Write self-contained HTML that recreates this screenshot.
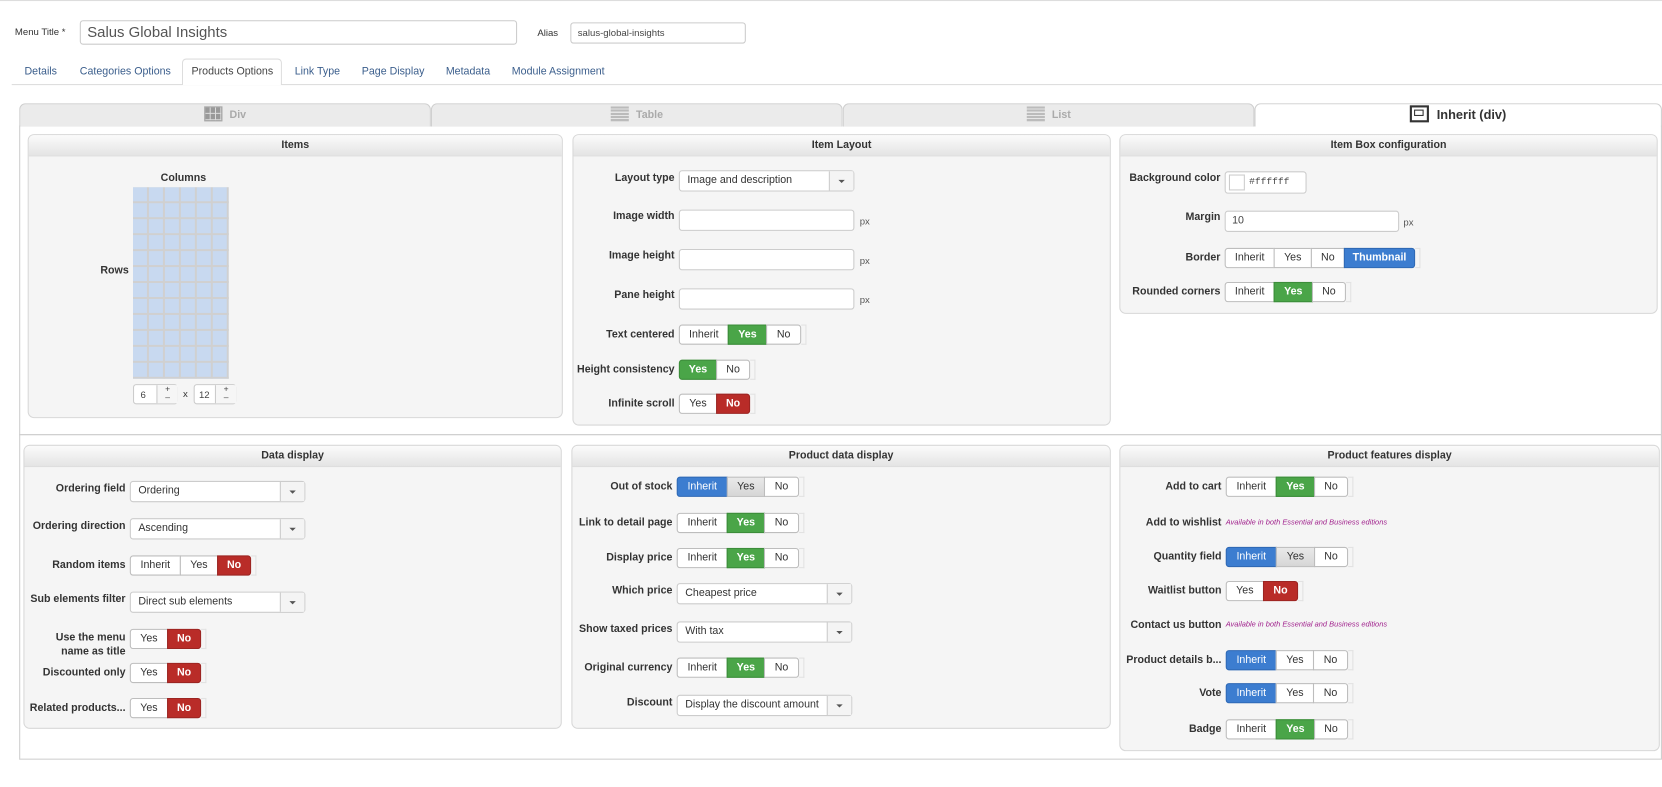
<!DOCTYPE html>
<html><head><meta charset="utf-8">
<style>
*{box-sizing:border-box;margin:0;padding:0}
html,body{width:1662px;height:787px;overflow:hidden;background:#fff}
#w{position:absolute;left:0;top:0;width:1562px;height:740px;transform:scale(1.064);transform-origin:0 0;font-family:"Liberation Sans",Arial,sans-serif;color:#333}
.a{position:absolute}
.l{position:absolute;font:bold 10px "Liberation Sans",Arial,sans-serif;color:#333;text-align:right;width:160px;white-space:nowrap}
.p{position:absolute;background:#f5f5f5;border:1px solid #d8d8d8;border-radius:6px;overflow:hidden}
.h{height:20px;background:linear-gradient(#fbfbfb,#e4e4e4);border-bottom:1px solid #ddd;text-align:center;font:bold 10px "Liberation Sans",Arial,sans-serif;line-height:20px;color:#333}
.g{position:absolute;display:flex;height:19px}
.g span{display:block;height:19px;line-height:17px;font-size:10px;text-align:center;background:#fff;border:1px solid #bdbdbd;margin-right:-1px;color:#333}
.g span:first-child{border-radius:3px 0 0 3px}
.g span.e{border-radius:0 3px 3px 0}
.g i{display:block;width:5px;height:19px;border:1px solid #e2e2e2;border-left:none;margin-left:1px}
.g .gr{background:#4aa548;border-color:#3c8d3a;color:#fff;font-weight:bold}
.g .rd{background:#b92c28;border-color:#9c2522;color:#fff;font-weight:bold}
.g .bl{background:#3c7dd0;border-color:#2f69b5;color:#fff}
.g .gy{background:linear-gradient(#e9e9e9,#d6d6d6)}
.s{position:absolute;height:20px;background:#fff;border:1px solid #ccc;border-radius:3px;font-size:10px;line-height:18px;padding-left:7px;color:#333}
.s:after{content:"";position:absolute;right:0;top:0;width:22px;height:18px;border-left:1px solid #ccc;background:#f4f4f4}
.s b{position:absolute;right:8px;top:8px;border-left:3px solid transparent;border-right:3px solid transparent;border-top:3px solid #555;z-index:2}
.in{position:absolute;height:20px;background:#fff;border:1px solid #ccc;border-radius:3px;font-size:10px;line-height:18px;padding-left:6px;color:#444}
.px{position:absolute;font-size:9px;color:#555}
.tab{position:absolute;font-size:10px;color:#3b5e8c}
.st{position:absolute;top:97px;height:22px;background:#ebebeb;border:1px solid #cfcfcf;border-bottom:none;border-radius:6px 6px 0 0;text-align:center;font:bold 10px "Liberation Sans",Arial,sans-serif;color:#aaa;line-height:21px}
.av{position:absolute;font:italic 7px "Liberation Sans",Arial,sans-serif;color:#a0208c}
</style></head><body><div id="w">
<div class="a" style="left:0;top:0;width:1562px;height:1px;background:#ddd"></div>
<div class="a" style="left:14px;top:25px;font-size:9px">Menu Title *</div>
<div class="in" style="left:75px;top:19px;width:411px;height:23px;font-size:14px;line-height:21px;color:#555">Salus Global Insights</div>
<div class="a" style="left:505px;top:26px;font-size:9px">Alias</div>
<div class="in" style="left:536px;top:21px;width:165px;font-size:9px">salus-global-insights</div>
<div class="a" style="left:11px;top:79px;width:1551px;height:1px;background:#ddd"></div>
<div class="a" style="left:171px;top:55px;width:94px;height:25px;background:#fff;border:1px solid #ddd;border-bottom:none;border-radius:4px 4px 0 0"></div>
<div class="tab" style="left:23px;top:62px">Details</div>
<div class="tab" style="left:75px;top:62px">Categories Options</div>
<div class="tab" style="left:180px;top:62px;color:#444">Products Options</div>
<div class="tab" style="left:277px;top:62px">Link Type</div>
<div class="tab" style="left:340px;top:62px">Page Display</div>
<div class="tab" style="left:419px;top:62px">Metadata</div>
<div class="tab" style="left:481px;top:62px">Module Assignment</div>

<div class="st" style="left:18px;width:387px"><span style="display:inline-block;width:17px;height:14px;background:#999;vertical-align:-3px;margin-right:7px;border:1px solid #aaa;background-image:linear-gradient(90deg,transparent 0 4px,#ddd 4px 5px),linear-gradient(transparent 0 5px,#ddd 5px 7px);background-size:5px 6px"></span>Div</div>
<div class="st" style="left:405px;width:387px"><span style="display:inline-block;width:17px;height:14px;background:repeating-linear-gradient(#bbb 0 2px,#e6e6e6 2px 3px);vertical-align:-3px;margin-right:7px"></span>Table</div>
<div class="st" style="left:792px;width:387px"><span style="display:inline-block;width:17px;height:14px;background:repeating-linear-gradient(#bbb 0 2px,#e6e6e6 2px 3px);vertical-align:-3px;margin-right:7px"></span>List</div>
<div class="st" style="left:1179px;width:383px;background:#fff;color:#333;font-size:12px"><span style="display:inline-block;width:18px;height:16px;border:2px solid #333;vertical-align:-3px;margin-right:7px;position:relative;background:#fff"><span style="position:absolute;left:2px;top:2px;width:9px;height:6px;border:1px solid #333"></span></span>Inherit (div)</div>
<div class="a" style="left:18px;top:118px;width:1544px;height:291px;border:1px solid #cfcfcf;border-top:none"></div>
<div class="a" style="left:18px;top:408px;width:1544px;height:306px;border:1px solid #cfcfcf"></div>

<div class="p" style="left:26px;top:126px;width:503px;height:267px"><div class="h">Items</div></div>
<div class="a" style="left:151px;top:162px;font:bold 10px 'Liberation Sans',Arial,sans-serif">Columns</div>
<div class="l" style="left:-39px;top:249px">Rows</div>
<div class="a" style="left:125px;top:176px;width:90px;height:180px;background-image:linear-gradient(90deg,#c8d9f0 0 13px,#d0d0d0 13px 15px);background-size:15px 15px"></div>
<div class="a" style="left:125px;top:176px;width:90px;height:180px;background-image:linear-gradient(transparent 0 13px,#d0d0d0 13px 15px);background-size:15px 15px"></div>
<div class="in" style="left:125px;top:361px;width:42px;height:19px;padding-left:6px;font-size:9px">6<span class="a" style="left:21px;top:0;width:20px;height:17px;border-left:1px solid #ccc;background:#f6f6f6;font-size:8px;line-height:8px;text-align:center">+<br>–</span></div>
<div class="a" style="left:172px;top:365px;font-size:9px">x</div>
<div class="in" style="left:182px;top:361px;width:40px;height:19px;padding-left:4px;font-size:9px">12<span class="a" style="left:19px;top:0;width:20px;height:17px;border-left:1px solid #ccc;background:#f6f6f6;font-size:8px;line-height:8px;text-align:center">+<br>–</span></div>

<div class="p" style="left:538px;top:126px;width:506px;height:274px"><div class="h">Item Layout</div></div>
<div class="l" style="left:474px;top:162px">Layout type</div><div class="s" style="left:638px;top:160px;width:165px">Image and description<b></b></div>
<div class="l" style="left:474px;top:198px">Image width</div><div class="in" style="left:638px;top:197px;width:165px"></div><div class="px" style="left:808px;top:203px">px</div>
<div class="l" style="left:474px;top:235px">Image height</div><div class="in" style="left:638px;top:234px;width:165px"></div><div class="px" style="left:808px;top:240px">px</div>
<div class="l" style="left:474px;top:272px">Pane height</div><div class="in" style="left:638px;top:271px;width:165px"></div><div class="px" style="left:808px;top:277px">px</div>
<div class="l" style="left:474px;top:309px">Text centered</div><div class="g" style="left:638px;top:305px"><span style="width:47px">Inherit</span><span class="gr" style="width:37px">Yes</span><span class="e" style="width:33px">No</span><i></i></div>
<div class="l" style="left:474px;top:342px">Height consistency</div><div class="g" style="left:638px;top:338px"><span class="gr" style="width:36px">Yes</span><span class="e" style="width:32px">No</span><i></i></div>
<div class="l" style="left:474px;top:374px">Infinite scroll</div><div class="g" style="left:638px;top:370px"><span style="width:36px">Yes</span><span class="rd e" style="width:32px">No</span><i></i></div>

<div class="p" style="left:1052px;top:126px;width:506px;height:169px"><div class="h">Item Box configuration</div></div>
<div class="l" style="left:987px;top:162px">Background color</div>
<div class="in" style="left:1151px;top:161px;width:77px;height:21px;padding-left:22px;font-family:'Liberation Mono',monospace;font-size:9px;line-height:19px">#ffffff<span class="a" style="left:3px;top:2px;width:15px;height:15px;border:1px solid #ccc;background:#fff"></span></div>
<div class="l" style="left:987px;top:199px">Margin</div><div class="in" style="left:1151px;top:198px;width:164px">10</div><div class="px" style="left:1319px;top:204px">px</div>
<div class="l" style="left:987px;top:237px">Border</div><div class="g" style="left:1151px;top:233px"><span style="width:47px">Inherit</span><span style="width:36px">Yes</span><span style="width:32px">No</span><span class="bl e" style="width:67px;font-weight:bold">Thumbnail</span><i></i></div>
<div class="l" style="left:987px;top:269px">Rounded corners</div><div class="g" style="left:1151px;top:265px"><span style="width:47px">Inherit</span><span class="gr" style="width:37px">Yes</span><span class="e" style="width:32px">No</span><i></i></div>

<div class="p" style="left:22px;top:418px;width:506px;height:267px"><div class="h">Data display</div></div>
<div class="l" style="left:-42px;top:454px">Ordering field</div><div class="s" style="left:122px;top:452px;width:165px">Ordering<b></b></div>
<div class="l" style="left:-42px;top:489px">Ordering direction</div><div class="s" style="left:122px;top:487px;width:165px">Ascending<b></b></div>
<div class="l" style="left:-42px;top:526px">Random items</div><div class="g" style="left:122px;top:522px"><span style="width:48px">Inherit</span><span style="width:36px">Yes</span><span class="rd e" style="width:32px">No</span><i></i></div>
<div class="l" style="left:-42px;top:558px">Sub elements filter</div><div class="s" style="left:122px;top:556px;width:165px">Direct sub elements<b></b></div>
<div class="l" style="left:-42px;top:593px;line-height:13px">Use the menu<br>name as title</div><div class="g" style="left:122px;top:591px"><span style="width:36px">Yes</span><span class="rd e" style="width:32px">No</span><i></i></div>
<div class="l" style="left:-42px;top:627px">Discounted only</div><div class="g" style="left:122px;top:623px"><span style="width:36px">Yes</span><span class="rd e" style="width:32px">No</span><i></i></div>
<div class="l" style="left:-42px;top:660px">Related products...</div><div class="g" style="left:122px;top:656px"><span style="width:36px">Yes</span><span class="rd e" style="width:32px">No</span><i></i></div>

<div class="p" style="left:537px;top:418px;width:507px;height:267px"><div class="h">Product data display</div></div>
<div class="l" style="left:472px;top:452px">Out of stock</div><div class="g" style="left:636px;top:448px"><span class="bl" style="width:48px">Inherit</span><span class="gy" style="width:36px">Yes</span><span class="e" style="width:33px">No</span><i></i></div>
<div class="l" style="left:472px;top:486px">Link to detail page</div><div class="g" style="left:636px;top:482px"><span style="width:48px">Inherit</span><span class="gr" style="width:36px">Yes</span><span class="e" style="width:33px">No</span><i></i></div>
<div class="l" style="left:472px;top:519px">Display price</div><div class="g" style="left:636px;top:515px"><span style="width:48px">Inherit</span><span class="gr" style="width:36px">Yes</span><span class="e" style="width:33px">No</span><i></i></div>
<div class="l" style="left:472px;top:550px">Which price</div><div class="s" style="left:636px;top:548px;width:165px">Cheapest price<b></b></div>
<div class="l" style="left:472px;top:586px">Show taxed prices</div><div class="s" style="left:636px;top:584px;width:165px">With tax<b></b></div>
<div class="l" style="left:472px;top:622px">Original currency</div><div class="g" style="left:636px;top:618px"><span style="width:48px">Inherit</span><span class="gr" style="width:36px">Yes</span><span class="e" style="width:33px">No</span><i></i></div>
<div class="l" style="left:472px;top:655px">Discount</div><div class="s" style="left:636px;top:653px;width:165px">Display the discount amount<b></b></div>

<div class="p" style="left:1052px;top:418px;width:508px;height:288px"><div class="h">Product features display</div></div>
<div class="l" style="left:988px;top:452px">Add to cart</div><div class="g" style="left:1152px;top:448px"><span style="width:48px">Inherit</span><span class="gr" style="width:37px">Yes</span><span class="e" style="width:32px">No</span><i></i></div>
<div class="l" style="left:988px;top:486px">Add to wishlist</div><div class="av" style="left:1152px;top:488px">Available in both Essential and Business editions</div>
<div class="l" style="left:988px;top:518px">Quantity field</div><div class="g" style="left:1152px;top:514px"><span class="bl" style="width:48px">Inherit</span><span class="gy" style="width:37px">Yes</span><span class="e" style="width:32px">No</span><i></i></div>
<div class="l" style="left:988px;top:550px">Waitlist button</div><div class="g" style="left:1152px;top:546px"><span style="width:36px">Yes</span><span class="rd e" style="width:33px">No</span><i></i></div>
<div class="l" style="left:988px;top:582px">Contact us button</div><div class="av" style="left:1152px;top:584px">Available in both Essential and Business editions</div>
<div class="l" style="left:988px;top:615px">Product details b...</div><div class="g" style="left:1152px;top:611px"><span class="bl" style="width:48px">Inherit</span><span style="width:36px">Yes</span><span class="e" style="width:33px">No</span><i></i></div>
<div class="l" style="left:988px;top:646px">Vote</div><div class="g" style="left:1152px;top:642px"><span class="bl" style="width:48px">Inherit</span><span style="width:36px">Yes</span><span class="e" style="width:33px">No</span><i></i></div>
<div class="l" style="left:988px;top:680px">Badge</div><div class="g" style="left:1152px;top:676px"><span style="width:48px">Inherit</span><span class="gr" style="width:37px">Yes</span><span class="e" style="width:32px">No</span><i></i></div>
</div></body></html>
